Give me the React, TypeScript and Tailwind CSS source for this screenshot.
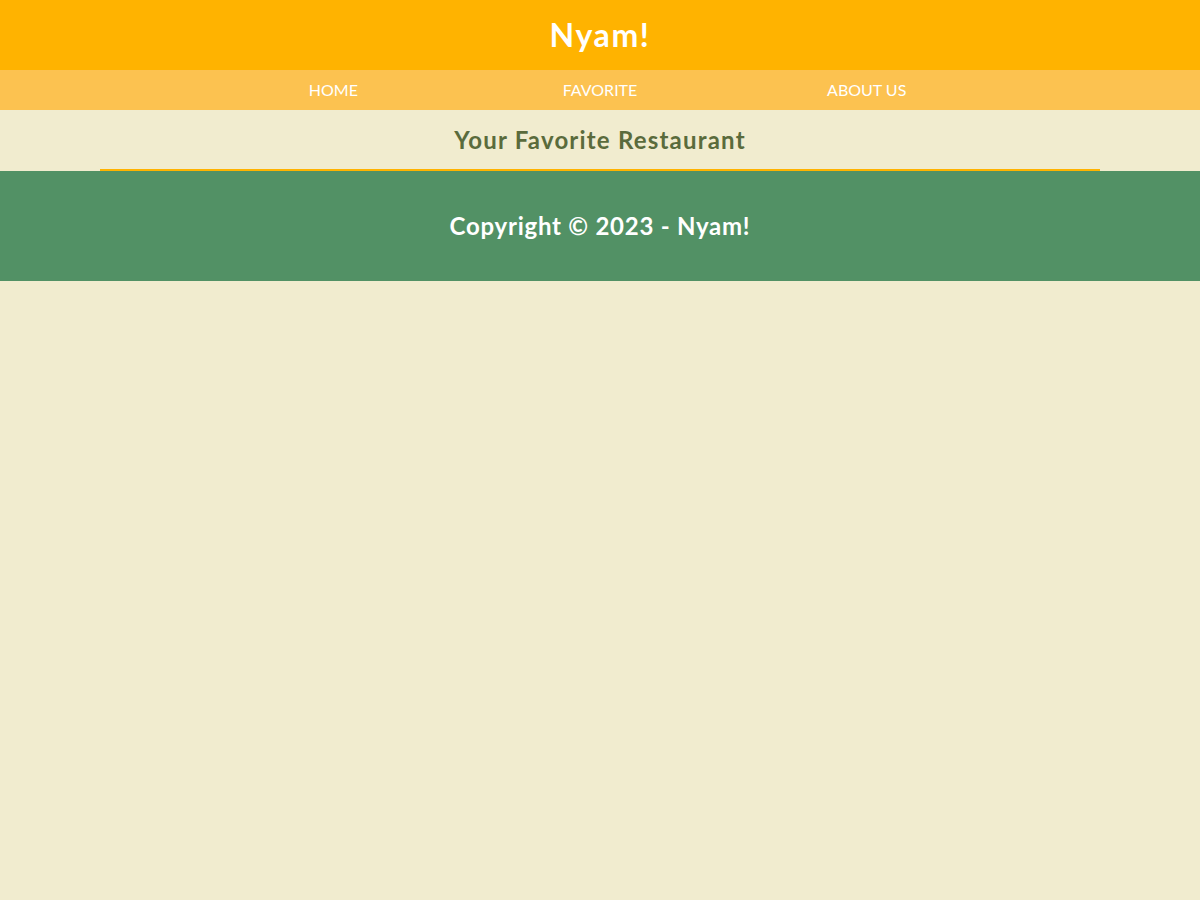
export default function App() {
  const font = { fontFamily: '"Lato", "Noto Sans", sans-serif' };
  return (
    <div className="min-h-[900px] bg-[#f1eccf]" style={font}>
      <header className="h-[70px] bg-[#ffb300] flex items-center justify-center">
        <h1 className="text-[32px] font-bold text-white leading-none tracking-[1.6px]">Nyam!</h1>
      </header>
      <nav className="h-[40px] bg-[#fcc250] flex justify-center">
        <ul className="w-[800px] flex">
          <li className="flex-1 flex items-center justify-center text-white text-[16px]">HOME</li>
          <li className="flex-1 flex items-center justify-center text-white text-[16px]">FAVORITE</li>
          <li className="flex-1 flex items-center justify-center text-white text-[16px]">ABOUT US</li>
        </ul>
      </nav>
      <main className="flex justify-center">
        <div className="w-[1000px] h-[61px] border-b-2 border-[#ffb300] flex items-center justify-center pt-[1px]">
          <h2 className="text-[24px] font-bold text-[#5a6b3c] tracking-[1.2px]">Your Favorite Restaurant</h2>
        </div>
      </main>
      <footer className="h-[110px] bg-[#529165] flex items-center justify-center">
        <p className="text-[24px] font-bold text-white tracking-[0.75px]">Copyright © 2023 - Nyam!</p>
      </footer>
    </div>
  );
}
